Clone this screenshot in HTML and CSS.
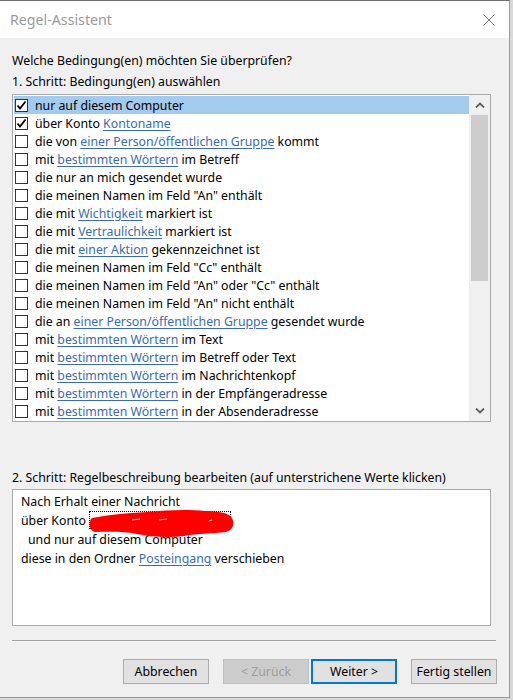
FILE: index.html
```html
<!DOCTYPE html>
<html lang="de">
<head>
<meta charset="utf-8">
<title>Regel-Assistent</title>
<link rel="stylesheet" href="styles.css">
</head>
<body>
<div class="window">
  <div class="titlebar">
    <span class="title">Regel-Assistent</span>
    <svg class="close" width="12" height="12" viewBox="0 0 12 12"><path d="M0.5 0.5 L11.5 11.5 M11.5 0.5 L0.5 11.5" stroke="#7a7a7a" stroke-width="1" fill="none"/></svg>
  </div>
  <div class="content">
    <div class="label first">Welche Bedingung(en) möchten Sie überprüfen?</div>
    <div class="label">1. Schritt: Bedingung(en) auswählen</div>
    <div class="listbox">
      <div class="rows">
        <div class="row selected"><span class="cb checked"><svg width="11" height="11" viewBox="0 0 11 11"><path d="M1.5 5.5 L4 8.5 L9.5 1.5" stroke="#000" stroke-width="1.8" fill="none"/></svg></span><span>nur auf diesem Computer</span></div>
        <div class="row"><span class="cb checked"><svg width="11" height="11" viewBox="0 0 11 11"><path d="M1.5 5.5 L4 8.5 L9.5 1.5" stroke="#000" stroke-width="1.8" fill="none"/></svg></span><span>über Konto <a class="lnk">Kontoname</a></span></div>
        <div class="row"><span class="cb"></span><span>die von <a class="lnk">einer Person/öffentlichen Gruppe</a> kommt</span></div>
        <div class="row"><span class="cb"></span><span>mit <a class="lnk">bestimmten Wörtern</a> im Betreff</span></div>
        <div class="row"><span class="cb"></span><span>die nur an mich gesendet wurde</span></div>
        <div class="row"><span class="cb"></span><span>die meinen Namen im Feld "An" enthält</span></div>
        <div class="row"><span class="cb"></span><span>die mit <a class="lnk">Wichtigkeit</a> markiert ist</span></div>
        <div class="row"><span class="cb"></span><span>die mit <a class="lnk">Vertraulichkeit</a> markiert ist</span></div>
        <div class="row"><span class="cb"></span><span>die mit <a class="lnk">einer Aktion</a> gekennzeichnet ist</span></div>
        <div class="row"><span class="cb"></span><span>die meinen Namen im Feld "Cc" enthält</span></div>
        <div class="row"><span class="cb"></span><span>die meinen Namen im Feld "An" oder "Cc" enthält</span></div>
        <div class="row"><span class="cb"></span><span>die meinen Namen im Feld "An" nicht enthält</span></div>
        <div class="row"><span class="cb"></span><span>die an <a class="lnk">einer Person/öffentlichen Gruppe</a> gesendet wurde</span></div>
        <div class="row"><span class="cb"></span><span>mit <a class="lnk">bestimmten Wörtern</a> im Text</span></div>
        <div class="row"><span class="cb"></span><span>mit <a class="lnk">bestimmten Wörtern</a> im Betreff oder Text</span></div>
        <div class="row"><span class="cb"></span><span>mit <a class="lnk">bestimmten Wörtern</a> im Nachrichtenkopf</span></div>
        <div class="row"><span class="cb"></span><span>mit <a class="lnk">bestimmten Wörtern</a> in der Empfängeradresse</span></div>
        <div class="row"><span class="cb"></span><span>mit <a class="lnk">bestimmten Wörtern</a> in der Absenderadresse</span></div>
      </div>
      <div class="scrollbar">
        <div class="arrow"><svg width="10" height="6" viewBox="0 0 10 6"><path d="M1 5.5 L5 1.5 L9 5.5" stroke="#606060" stroke-width="1.8" fill="none"/></svg></div>
        <div class="track"><div class="thumb"></div></div>
        <div class="arrow"><svg width="10" height="6" viewBox="0 0 10 6"><path d="M1 0.5 L5 4.5 L9 0.5" stroke="#606060" stroke-width="1.8" fill="none"/></svg></div>
      </div>
    </div>
    <div class="label second">2. Schritt: Regelbeschreibung bearbeiten (auf unterstrichene Werte klicken)</div>
    <div class="descbox">
      <div class="dline">Nach Erhalt einer Nachricht</div>
      <div class="dline">über Konto <span class="redact"><a class="lnk">&nbsp;&nbsp;&nbsp;&nbsp;&nbsp;</a><svg class="scribble" width="150" height="30" viewBox="0 0 150 30"><path d="M5 9 C20 6 40 4 60 3 C80 1 100 0 118 2 C132 2 142 4 145 9 C148 15 146 21 139 23 C125 25 112 24 97 27 C82 29 65 28 50 25 C35 22 20 23 8 23 C2 22 1 12 5 9 Z" fill="#ff0000"/><path d="M45 11 L53 10 M72 11 L80 10 M122 12 L125 11" stroke="#f3d6d6" stroke-width="1" fill="none"/></svg></span></div>
      <div class="dline indent">und nur auf diesem Computer</div>
      <div class="dline">diese in den Ordner <a class="lnk">Posteingang</a> verschieben</div>
    </div>
    <div class="separator"></div>
    <div class="buttons">
      <button class="btn">Abbrechen</button>
      <button class="btn disabled">&lt; Zurück</button>
      <button class="btn default">Weiter &gt;</button>
      <button class="btn">Fertig stellen</button>
    </div>
  </div>
</div>
</body>
</html>
```

FILE: styles.css
```css
html, body {
  margin: 0;
  padding: 0;
}
body {
  background: #d9d9d9;
  width: 513px;
  height: 700px;
  overflow: hidden;
  font-family: "Noto Sans", "Open Sans", sans-serif;
  font-size: 12.3px;
  color: #000;
}
.window {
  width: 509px;
  height: 696px;
  background: #f0f0f0;
  border-top: 1px solid #6e6e6e;
  border-right: 1px solid #9a9a9a;
  border-bottom: 1px solid #9a9a9a;
  display: flex;
  flex-direction: column;
}
.titlebar {
  height: 37px;
  background: #fff;
  display: flex;
  align-items: center;
  justify-content: space-between;
  padding: 0 14px 0 10px;
  flex-shrink: 0;
}
.title {
  font-size: 14.2px;
  color: #9a9a9a;
  margin-top: -1px;
}
.content {
  padding: 0 12px;
  display: flex;
  flex-direction: column;
}
.label {
  line-height: 18px;
  height: 18px;
  white-space: nowrap;
  margin-top: 3px;
}
.label.first {
  margin-top: 14px;
}
.label.second {
  margin-top: 47px;
}
.listbox {
  margin-top: 3px;
  width: 477px;
  height: 326px;
  border: 1px solid #a9a9a9;
  background: #fff;
  display: flex;
}
.rows {
  flex: 1;
  padding: 1px 0 1px 1px;
}
.row {
  height: 18px;
  display: flex;
  align-items: center;
  padding-left: 1px;
  white-space: nowrap;
}
.row.selected {
  background: #a3cbee;
}
.cb {
  width: 11px;
  height: 11px;
  border: 1px solid #333;
  background: #fff;
  margin-right: 7px;
  flex-shrink: 0;
  display: flex;
}
.lnk {
  color: #3a6cb0;
  text-decoration: underline;
  text-underline-offset: 2px;
}
.scrollbar {
  width: 21px;
  background: #f0f0f0;
  display: flex;
  flex-direction: column;
}
.arrow {
  height: 20px;
  display: flex;
  align-items: center;
  justify-content: center;
}
.track {
  flex: 1;
  padding: 0 2px;
}
.thumb {
  height: 166px;
  background: #cdcdcd;
}
.descbox {
  margin-top: 2px;
  width: 469px;
  height: 133px;
  border: 1px solid #a9a9a9;
  background: #fff;
  padding: 2px 0 0 8px;
}
.dline {
  line-height: 19px;
  height: 19px;
  white-space: nowrap;
}
.dline.indent {
  padding-left: 7px;
}
.redact {
  position: relative;
  display: inline-block;
  width: 140px;
  height: 16px;
  vertical-align: top;
  border: 1px dotted #000;
  line-height: 16px;
}
.scribble {
  position: absolute;
  left: -3px;
  top: -3px;
}
.separator {
  margin-top: 14px;
  width: 484px;
  height: 1px;
  background: #a0a0a0;
  border-bottom: 1px solid #fbfbfb;
}
.buttons {
  margin-top: 17px;
  display: flex;
  justify-content: flex-end;
}
.btn {
  width: 86px;
  height: 25px;
  margin: 0 0 0 14px;
  padding: 0;
  background: #e1e1e1;
  border: 1px solid #adadad;
  font-family: "Noto Sans", "Open Sans", sans-serif;
  font-size: 12.3px;
  color: #000;
}
.btn.disabled {
  background: #cccccc;
  border-color: #bfbfbf;
  color: #9d9d9d;
}
.btn.default {
  margin-left: 2px;
  border: 2px solid #0078d7;
}
```
